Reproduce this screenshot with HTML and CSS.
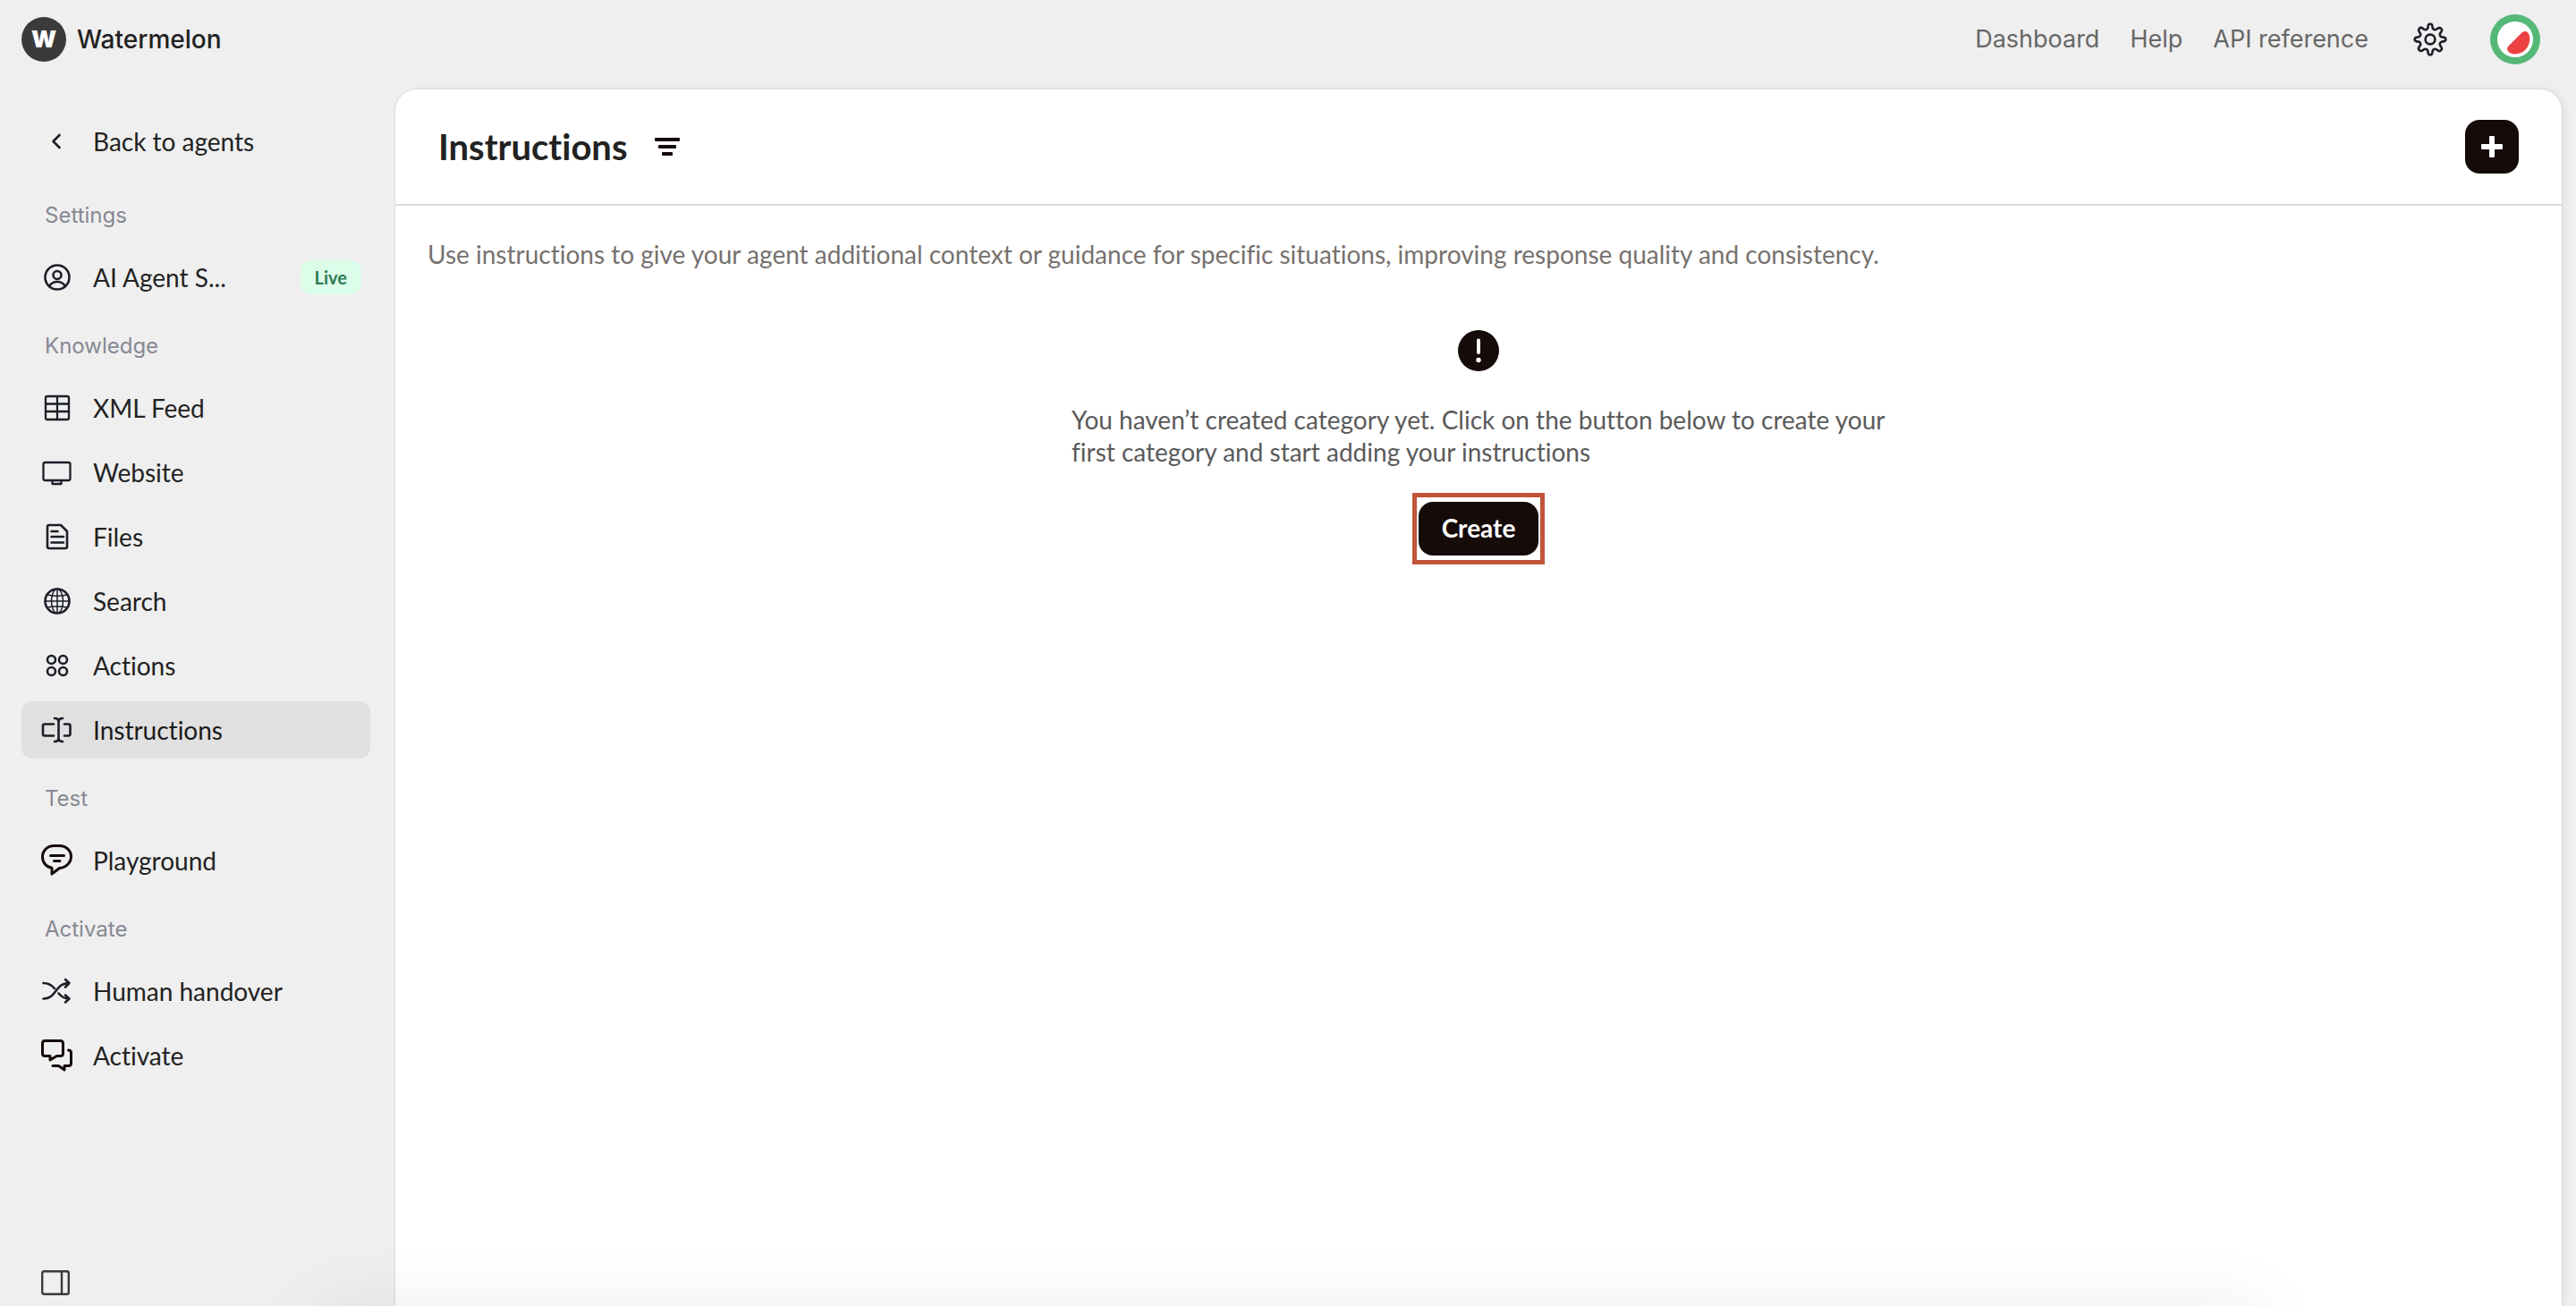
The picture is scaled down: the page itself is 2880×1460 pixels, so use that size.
FILE: index.html
```
<!DOCTYPE html>
<html lang="en">
<head>
<meta charset="utf-8">
<title>Watermelon – Instructions</title>
<meta name="viewport" content="width=device-width, initial-scale=1">
<link rel="stylesheet" href="styles.css">
</head>
<body>
<header class="topbar">
  <a class="brand" href="#"><span class="brand-mark">W</span><span>Watermelon</span></a>
  <nav class="top-links" aria-label="Main">
    <a href="#">Dashboard</a>
    <a href="#">Help</a>
    <a href="#">API reference</a>
  </nav>
  <button class="icon-button" type="button" aria-label="Settings">
    <svg width="38" height="38" viewBox="0 0 38 38" fill="none" stroke="#1b1f27" stroke-width="2.600" stroke-linejoin="round">
      <path d="M16.6 4.2Q16.8 1.7 19 1.7T21.4 4.2L21.8 6.6Q22.2 7.4 23.4 8Q24.700 8.500 25.500 8L27.600 6.600Q29.600 5.400 31.200 6.900T31.400 10.500L30 12.500Q29.500 13.300 30 14.600Q30.600 15.900 31.400 16.200L33.800 16.600Q36.300 16.900 36.300 19T33.800 21.400L31.400 21.800Q30.600 22.200 30 23.400Q29.500 24.700 30 25.500L31.400 27.600Q32.600 29.600 31.100 31.200T27.500 31.400L25.500 30Q24.700 29.500 23.400 30Q22.100 30.600 21.800 31.400L21.400 33.800Q21.100 36.300 19 36.300T16.600 33.800L16.200 31.400Q15.800 30.600 14.600 30Q13.300 29.500 12.500 30L10.400 31.400Q8.400 32.600 6.800 31.100T6.600 27.500L8 25.500Q8.500 24.700 8 23.400Q7.400 22.100 6.600 21.800L4.200 21.400Q1.700 21.100 1.700 19T4.200 16.600L6.600 16.200Q7.400 15.800 8 14.600Q8.500 13.300 8 12.500L6.600 10.400Q5.400 8.400 6.900 6.800T10.500 6.600L12.500 8Q13.300 8.500 14.600 8Q15.900 7.400 16.200 6.600Z"/>
      <circle cx="19" cy="19" r="5.400"/>
    </svg>
  </button>
  <button class="icon-button avatar" type="button" aria-label="Account">
    <svg width="56" height="56" viewBox="0 0 56 56">
      <circle cx="28" cy="28" r="28" fill="#55b877"/>
      <circle cx="28" cy="28" r="20" fill="#fff"/>
      <path d="M35.500 20.500C39.500 17 44 19.500 44.300 27C44.600 37 37 44.800 27 44.400C19.500 44 17.500 39 20.500 35.500Z" fill="#eb4141"/>
    </svg>
  </button>
</header>

<div class="shell">
  <aside class="sidebar">
    <nav class="side-nav" aria-label="Agent">
      <a class="item back" href="#">
        <svg class="icon" viewBox="0 0 40 40"><path d="M22.500 13L15.500 20L22.500 27"/></svg>
        <span>Back to agents</span>
      </a>
      <h2 class="label">Settings</h2>
      <a class="item" href="#">
        <svg class="icon" viewBox="0 0 40 40"><circle cx="20" cy="20" r="13.500"/><circle cx="20" cy="17.500" r="4.500"/><path d="M11 30Q14 25 20 25T29 30"/></svg>
        <span>AI Agent S...</span>
        <span class="badge">Live</span>
      </a>
      <h2 class="label">Knowledge</h2>
      <a class="item" href="#">
        <svg class="icon thin" viewBox="0 0 40 40"><rect x="7" y="7" width="26" height="26" rx="2"/><path d="M20 7V33M7 15.500H33M7 24H33"/></svg>
        <span>XML Feed</span>
      </a>
      <a class="item" href="#">
        <svg class="icon thin" viewBox="0 0 40 40"><rect x="4.500" y="9" width="30" height="20" rx="2"/><path d="M14.500 29V33H24.500V29"/></svg>
        <span>Website</span>
      </a>
      <a class="item" href="#">
        <svg class="icon" viewBox="0 0 40 40"><path d="M11 7H24L31 14V31Q31 33 29 33H11Q9 33 9 31V9Q9 7 11 7ZM13.500 14H20.500M13.500 20H27M13.500 26.500H27"/></svg>
        <span>Files</span>
      </a>
      <a class="item" href="#">
        <svg class="icon" viewBox="0 0 40 40"><circle cx="20" cy="20" r="13.500"/><g stroke-width="1.500"><ellipse cx="20" cy="20" rx="6.500" ry="13.500"/><path d="M20 6.500V33.500M6.500 20H33.500M9.500 13Q20 15.500 30.500 13M9.500 27Q20 24.500 30.500 27"/></g></svg>
        <span>Search</span>
      </a>
      <a class="item" href="#">
        <svg class="icon" viewBox="0 0 40 40"><circle cx="13.500" cy="13.500" r="4.500"/><circle cx="26.500" cy="13.500" r="4.500"/><circle cx="13.500" cy="26.500" r="4.500"/><circle cx="26.500" cy="26.500" r="4.500"/></svg>
        <span>Actions</span>
      </a>
      <a class="item active" href="#" aria-current="page">
        <svg class="icon" viewBox="0 0 40 40"><path d="M16 13.500H6Q4 13.500 4 15.500V24.500Q4 26.500 6 26.500H16M28 13.500H32.500Q34.500 13.500 34.500 15.500V24.500Q34.500 26.500 32.500 26.500H28M17 7Q21.500 7 21.500 11V29Q21.500 33 17 33M26 7Q21.500 7 21.500 11M26 33Q21.500 33 21.500 29"/></svg>
        <span>Instructions</span>
      </a>
      <h2 class="label">Test</h2>
      <a class="item" href="#">
        <svg class="icon dark" viewBox="0 0 40 40"><path d="M16.500 3.500H22.500C30 3.500 35.500 9 35.500 15.500S30 28 22.500 28.500L14 35V28.300C7.500 27 3.500 22 3.500 16C3.500 9 9 3.500 16.500 3.500ZM12.500 14.500H27.500M16.500 20.500H23"/></svg>
        <span>Playground</span>
      </a>
      <h2 class="label">Activate</h2>
      <a class="item" href="#">
        <svg class="icon" viewBox="0 0 40 40"><path d="M4.500 11C11 11 14 13.500 17 17M4.500 28.500C20 28.500 17 11 33 11M21.500 22.500C24 25.500 27 28.500 33 28.500M29 7L33.500 11L29 15.500M29 24.500L33.500 28.500L29 32.500"/></svg>
        <span>Human handover</span>
      </a>
      <a class="item" href="#">
        <svg class="icon dark" viewBox="0 0 40 40"><path d="M6 3.500H23.500Q26.500 3.500 26.500 6.500V17.500Q26.500 20.500 23.500 20.500H19.500L12 25V20.500H6Q3.500 20.500 3.500 17.500V6.500Q3.500 3.500 6 3.500ZM32.500 14Q35.500 14 35.500 17V28.500Q35.500 31.500 32.500 31.500H28V36L21.500 31.500H15"/></svg>
        <span>Activate</span>
      </a>
    </nav>
    <button class="icon-button collapse" type="button" aria-label="Collapse sidebar">
      <svg width="32" height="28" viewBox="0 0 32 28" fill="none" stroke="#3a3a3a" stroke-width="2.400"><rect x="1.200" y="1.200" width="29.600" height="25.600" rx="2"/><path d="M23 1V27"/></svg>
    </button>
  </aside>

  <main class="panel">
    <div class="panel-head">
      <h1>Instructions</h1>
      <button class="icon-button" type="button" aria-label="Filter">
        <svg width="28" height="20" viewBox="0 0 28 20" fill="#150b08"><rect width="28" height="4" rx="1"/><rect x="4" y="8" width="20" height="4" rx="1"/><rect x="8" y="16" width="12" height="4" rx="1"/></svg>
      </button>
      <button class="add" type="button" aria-label="Add">
        <svg width="24" height="24" viewBox="0 0 24 24" fill="#fff"><rect x="9" y="0" width="6" height="24" rx="1"/><rect y="9" width="24" height="6" rx="1"/></svg>
      </button>
    </div>
    <p class="intro">Use instructions to give your agent additional context or guidance for specific situations, improving response quality and consistency.</p>
    <section class="empty">
      <svg width="46" height="46" viewBox="0 0 46 46"><circle cx="23" cy="23" r="23" fill="#150b08"/><path d="M23 11.500V25" stroke="#fff" stroke-width="4" stroke-linecap="round"/><circle cx="23" cy="33.500" r="2.700" fill="#fff"/></svg>
      <p>You haven’t created category yet. Click on the button below to create your<br>first category and start adding your instructions</p>
      <div class="callout"><button class="create" type="button">Create</button></div>
    </section>
  </main>
</div>
<div class="edge-shade" aria-hidden="true"></div>
</body>
</html>
```
FILE: styles.css
```
* { box-sizing: border-box; }

body {
  margin: 0;
  min-height: 100vh;
  display: flex;
  flex-direction: column;
  overflow: hidden;
  background: #efefef;
  color: #222;
  font-family: Lato, "Liberation Sans", sans-serif;
  font-size: 28px;
  line-height: 36px;
  font-variant-ligatures: no-common-ligatures;
}

h1, h2, p { margin: 0; }
a { color: inherit; text-decoration: none; }
button { font: inherit; border: 0; cursor: pointer; }

.icon-button {
  display: flex;
  padding: 0;
  background: none;
}

/* Top bar */
.topbar {
  display: flex;
  align-items: center;
  height: 100px;
  padding: 0 40px 12px 24px;
  font-family: Inter, "Liberation Sans", sans-serif;
}

.brand {
  display: flex;
  align-items: center;
  gap: 12px;
  font-weight: 500;
}

.brand-mark {
  width: 50px;
  height: 50px;
  border-radius: 50%;
  background: #3a3a3a;
  color: #fff;
  font-size: 26px;
  font-weight: 900;
  line-height: 50px;
  text-align: center;
}

.top-links {
  display: flex;
  gap: 34px;
  margin: 0 50px 0 auto;
  color: #666;
  font-size: 27px;
}

.avatar { margin-left: 48px; }

/* Page body */
.shell {
  flex: 1;
  display: grid;
  grid-template-columns: 442px 1fr;
  padding-right: 16px;
}

.sidebar {
  display: flex;
  flex-direction: column;
  justify-content: space-between;
  padding: 26px 28px 12px 24px;
}

.side-nav {
  display: flex;
  flex-direction: column;
  gap: 8px;
}

.item {
  display: flex;
  align-items: center;
  gap: 20px;
  height: 64px;
  padding: 0 10px 0 20px;
  border-radius: 12px;
}

.item.active { background: #e0e0e0; color: #1a1a1a; }
.item.back { margin-bottom: 6px; }

.icon {
  flex: none;
  width: 40px;
  height: 40px;
  fill: none;
  stroke: #1b1f27;
  stroke-width: 2.600;
  stroke-linecap: round;
  stroke-linejoin: round;
}

.icon.thin { stroke-width: 2.300; }
.icon.dark { stroke: #150b08; stroke-width: 3; }

.label {
  height: 66px;
  padding: 8px 0 0 26px;
  color: #868893;
  font-family: Inter, "Liberation Sans", sans-serif;
  font-size: 24px;
  font-weight: 400;
  line-height: 58px;
}

.badge {
  margin-left: auto;
  padding: 0 16px;
  border-radius: 12px;
  background: #dbfdea;
  color: #2f7a54;
  font-size: 20px;
  font-weight: 700;
  line-height: 38px;
}

.collapse { margin-left: 22px; align-self: flex-start; }

/* Content panel */
.panel {
  border-radius: 24px 24px 0 0;
  background: #fff;
  box-shadow: 0 0 0 1px #dcdcdc, 4px 0 8px rgba(0, 0, 0, 0.06);
}

.panel-head {
  display: flex;
  align-items: center;
  gap: 30px;
  height: 130px;
  padding: 0 48px;
  border-bottom: 2px solid #d9d9d9;
}

.panel-head h1 {
  font-size: 40px;
  font-weight: 700;
  line-height: 48px;
}

.add {
  display: grid;
  place-items: center;
  width: 60px;
  height: 60px;
  margin-left: auto;
  border-radius: 16px;
  background: #150b08;
}

.intro {
  padding: 36px 36px 0;
  color: #76716e;
}

.empty {
  display: flex;
  flex-direction: column;
  align-items: center;
  padding-top: 67px;
  color: #5a5a5a;
}

.empty p {
  width: 100%;
  max-width: 910px;
  margin: 36px 0 28px;
  white-space: nowrap;
}

.callout {
  padding: 5px 2px;
  border: 5px solid #c2543a;
}

.create {
  display: block;
  min-width: 134px;
  height: 60px;
  padding: 0 24px 2px;
  border-radius: 16px;
  background: #150b08;
  color: #fff;
  font-weight: 700;
}

/* Soft shade rising from the bottom edge */
.edge-shade {
  position: fixed;
  top: 100%;
  left: 12%;
  right: 12%;
  height: 80px;
  border-radius: 48px;
  box-shadow: 0 0 80px rgba(0, 0, 0, 0.08);
  pointer-events: none;
}
```
